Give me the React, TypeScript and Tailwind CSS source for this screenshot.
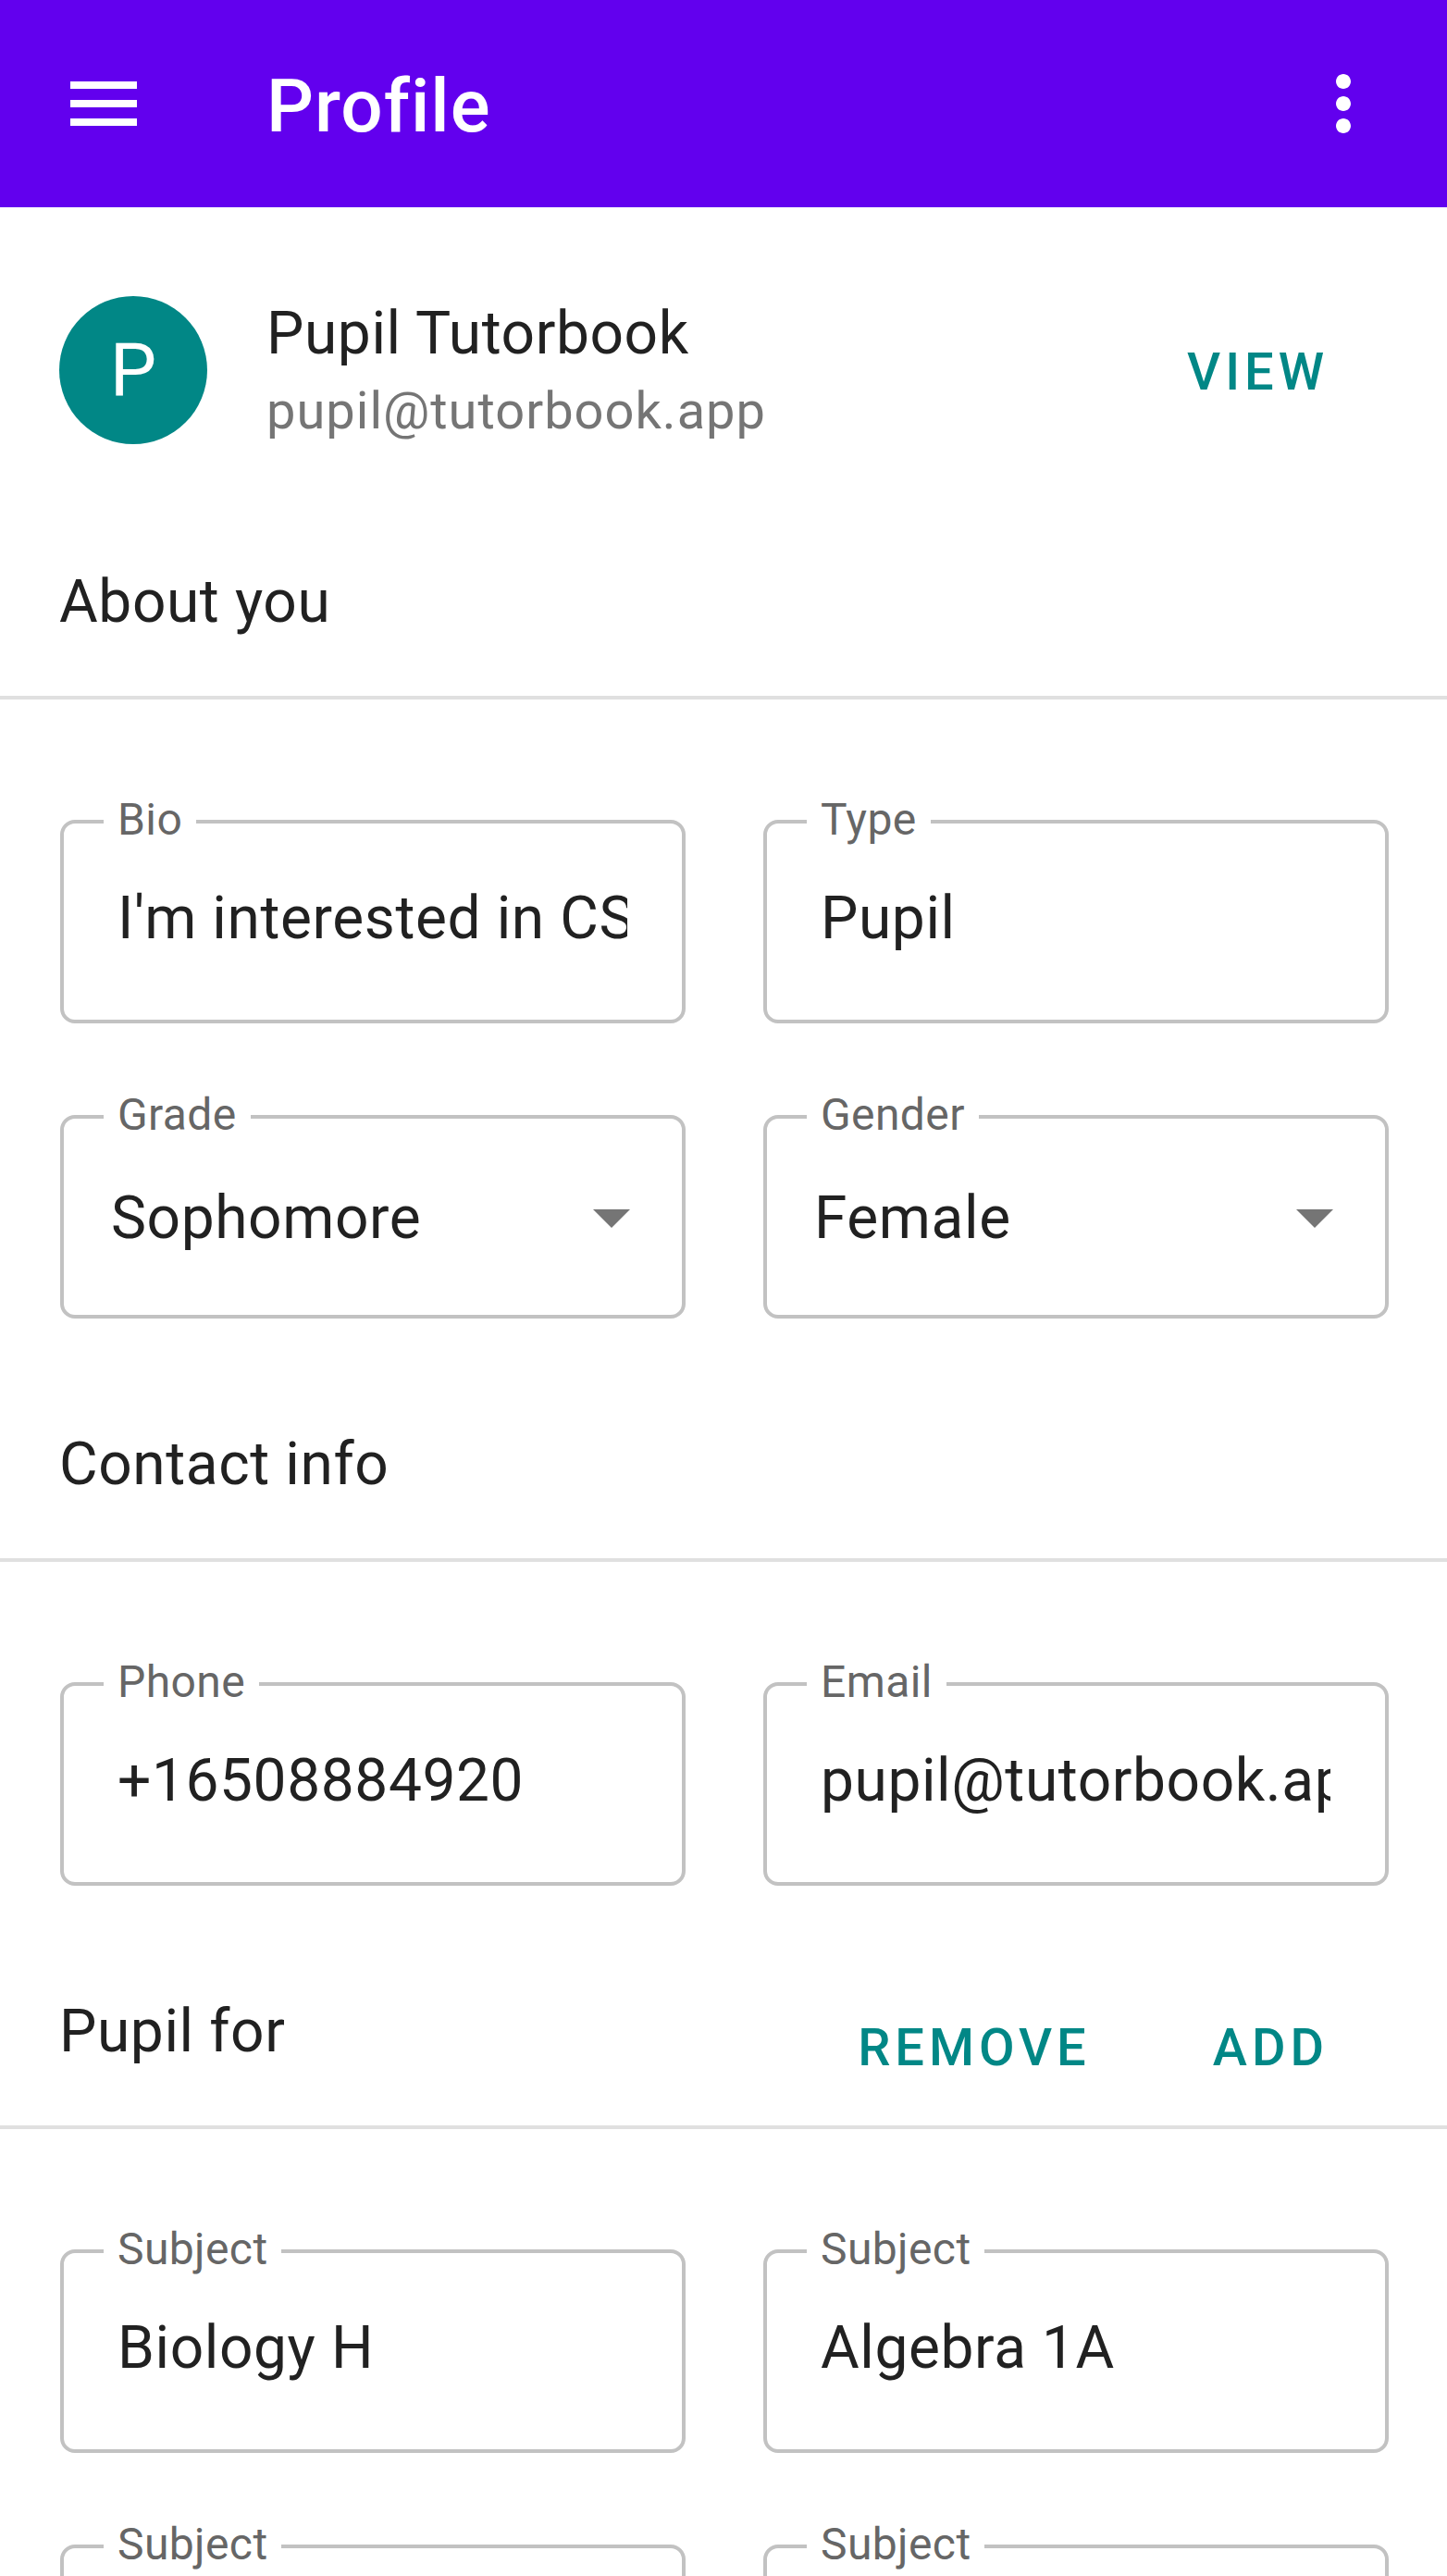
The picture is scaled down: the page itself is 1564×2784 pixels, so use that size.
import React from "react";

function MenuIcon() {
  return (
    <svg width="96" height="96" viewBox="0 0 24 24" fill="#ffffff">
      <path d="M3 18h18v-2H3v2zm0-5h18v-2H3v2zm0-7v2h18V6H3z" />
    </svg>
  );
}

function MoreIcon() {
  return (
    <svg width="96" height="96" viewBox="0 0 24 24" fill="#ffffff">
      <path d="M12 8c1.1 0 2-.9 2-2s-.9-2-2-2-2 .9-2 2 .9 2 2 2zm0 2c-1.1 0-2 .9-2 2s.9 2 2 2 2-.9 2-2-.9-2-2-2zm0 6c-1.1 0-2 .9-2 2s.9 2 2 2 2-.9 2-2-.9-2-2-2z" />
    </svg>
  );
}

function TextField({ label, value }: { label: string; value: string }) {
  return (
    <div className="relative h-[220px] rounded-[16px] border-4 border-[#c2c2c2]">
      <span className="absolute left-[43px] top-[-28px] bg-white px-[15px] text-[48px] leading-[48px] tracking-[0.4px] text-[#666666]">
        {label}
      </span>
      <div className="flex h-full items-center pl-[58px] pr-[59px] pb-[7px]">
        <div className="overflow-hidden whitespace-nowrap text-[64px] leading-[96px] tracking-[0.6px] text-[#212121]">
          {value}
        </div>
      </div>
    </div>
  );
}

function SelectField({ label, value }: { label: string; value: string }) {
  return (
    <div className="relative h-[220px] rounded-[16px] border-4 border-[#c2c2c2]">
      <span className="absolute left-[43px] top-[-28px] bg-white px-[15px] text-[48px] leading-[48px] tracking-[0.4px] text-[#666666]">
        {label}
      </span>
      <div className="flex h-full items-center justify-between pl-[51px] pr-[56px] pt-[3px]">
        <span className="whitespace-nowrap text-[64px] leading-[96px] tracking-[0.6px] text-[#212121]">{value}</span>
        <svg width="40" height="20" viewBox="0 0 40 20">
          <polygon points="0,0 40,0 20,20" fill="#757575" />
        </svg>
      </div>
    </div>
  );
}

function SectionHeader({ title, children }: { title: string; children?: React.ReactNode }) {
  return (
    <div className="border-b-4 border-[#e0e0e0] pt-[3px] pb-[53px]">
      <div className="flex h-[96px] items-start justify-between pl-[64px] pr-[128px]">
        <span className="text-[64px] leading-[96px] tracking-[0.6px] text-[#212121]">{title}</span>
        {children}
      </div>
    </div>
  );
}

function TextButton({ label }: { label: string }) {
  return (
    <span className="text-[56px] font-medium leading-[80px] tracking-[5px] text-[#018786]">{label}</span>
  );
}

export default function App() {
  return (
    <div className="min-h-screen bg-white font-['Roboto',sans-serif]">
      {/* top app bar */}
      <header className="flex h-[224px] items-start bg-[#6200ee] px-[64px]">
        <div className="mt-[64px]">
          <MenuIcon />
        </div>
        <h1 className="ml-[128px] mt-[67px] text-[80px] font-medium leading-[96px] tracking-[1px] text-white">
          Profile
        </h1>
        <div className="ml-auto mt-[64px]">
          <MoreIcon />
        </div>
      </header>

      {/* account row */}
      <div className="flex h-[256px] items-start pl-[64px] pr-[128px] pt-[96px]">
        <div className="flex h-[160px] w-[160px] shrink-0 items-center justify-center rounded-full bg-[#018786] text-[80px] leading-none text-white">
          P
        </div>
        <div className="ml-[64px] mt-[-1px] flex flex-1 flex-col">
          <span className="text-[64px] leading-[84px] tracking-[0.6px] text-[#212121]">Pupil Tutorbook</span>
          <span className="mt-[1px] text-[56px] leading-[80px] tracking-[1px] text-[#757575]">pupil@tutorbook.app</span>
        </div>
        <div className="mt-[42px]">
          <TextButton label="VIEW" />
        </div>
      </div>

      <div className="mt-[120px]">
        <SectionHeader title="About you" />
      </div>
      <div className="grid grid-cols-2 gap-x-[84px] gap-y-[99px] pl-[65px] pr-[63px] pt-[130px]">
        <TextField label="Bio" value="I'm interested in CS and math." />
        <TextField label="Type" value="Pupil" />
        <SelectField label="Grade" value="Sophomore" />
        <SelectField label="Gender" value="Female" />
      </div>

      <div className="mt-[107px]">
        <SectionHeader title="Contact info" />
      </div>
      <div className="grid grid-cols-2 gap-x-[84px] gap-y-[99px] pl-[65px] pr-[63px] pt-[130px]">
        <TextField label="Phone" value="+16508884920" />
        <TextField label="Email" value="pupil@tutorbook.app" />
      </div>

      <div className="mt-[107px]">
        <SectionHeader title="Pupil for">
          <div className="mt-[25px] flex gap-[132px]">
            <TextButton label="REMOVE" />
            <TextButton label="ADD" />
          </div>
        </SectionHeader>
      </div>
      <div className="grid grid-cols-2 gap-x-[84px] gap-y-[99px] pl-[65px] pr-[63px] pt-[130px] pb-[120px]">
        <TextField label="Subject" value="Biology H" />
        <TextField label="Subject" value="Algebra 1A" />
        <TextField label="Subject" value="Chemistry H" />
        <TextField label="Subject" value="Computer Science" />
      </div>
    </div>
  );
}
